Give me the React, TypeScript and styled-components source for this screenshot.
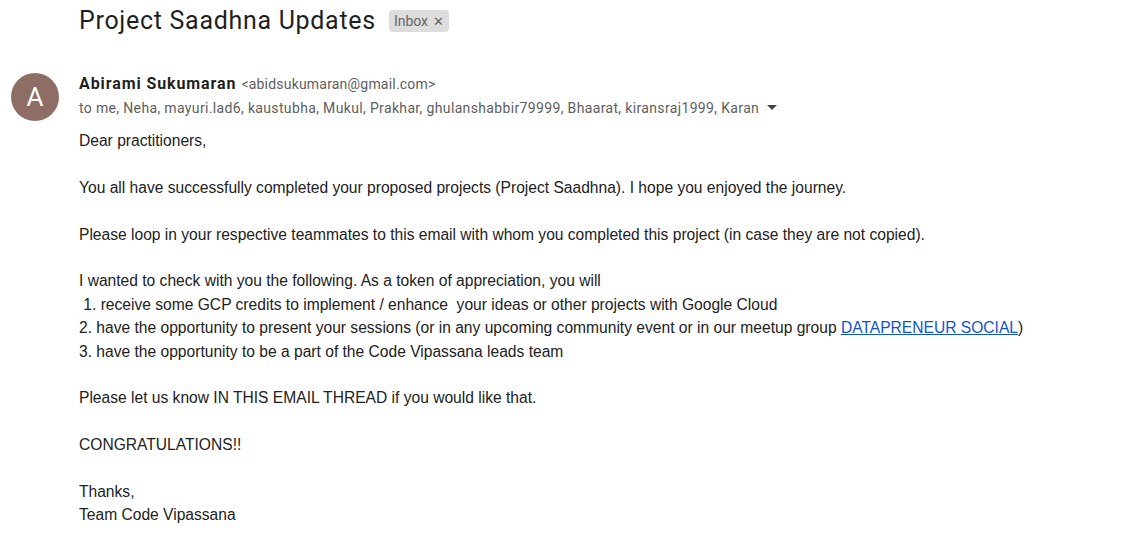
import React from "react";
import styled, { createGlobalStyle } from "styled-components";

const Global = createGlobalStyle`
  html, body { margin: 0; padding: 0; background: #fff; }
  body { font-family: "Liberation Sans", Arial, sans-serif; }
`;

const Page = styled.div`
  width: 1141px;
  height: 534px;
  overflow: hidden;
  background: #fff;
`;

const TitleRow = styled.div`
  display: flex;
  align-items: center;
  gap: 13px;
  padding: 5px 0 0 79px;
  height: 32px;
`;

const Title = styled.h1`
  margin: 0;
  font-family: Roboto, "Open Sans", sans-serif;
  font-weight: 400;
  font-size: 25px;
  letter-spacing: 0.7px;
  color: #1f1f1f;
  line-height: 32px;
`;

const Chip = styled.span`
  display: inline-flex;
  align-items: center;
  gap: 5px;
  height: 22px;
  padding: 0 5px;
  border-radius: 4px;
  background: #dddddd;
  color: #666;
  font-family: Roboto, sans-serif;
  font-size: 14px;
`;

const ChipX = styled.span`
  font-size: 13px;
  color: #666;
`;

const Message = styled.div`
  display: flex;
  gap: 20px;
  padding: 35px 0 0 11px;
`;

const Avatar = styled.div`
  flex: 0 0 48px;
  width: 48px;
  height: 48px;
  border-radius: 50%;
  background: #8e6e64;
  color: #fff;
  display: flex;
  align-items: center;
  justify-content: center;
  font-family: Roboto, sans-serif;
  font-size: 26px;
  margin-top: 1px;
`;

const Content = styled.div`
  display: flex;
  flex-direction: column;
`;

const SenderLine = styled.div`
  display: flex;
  align-items: baseline;
  gap: 5px;
  font-family: Roboto, sans-serif;
  height: 22px;
  padding-top: 2px;
`;

const SenderName = styled.span`
  font-weight: 700;
  font-size: 16px;
  letter-spacing: 0.9px;
  color: #1f1f1f;
`;

const SenderEmail = styled.span`
  font-size: 14px;
  letter-spacing: 0.2px;
  color: #5e5e5e;
`;

const Recipients = styled.div`
  display: flex;
  align-items: center;
  gap: 8px;
  font-family: Roboto, sans-serif;
  font-size: 14px;
  letter-spacing: 0.35px;
  color: #5e5e5e;
  height: 20px;
  margin-top: 2px;
`;

const Body = styled.div`
  margin-top: 11px;
  font-family: "Liberation Sans", Arial, sans-serif;
  font-size: 15.6px;
  line-height: 23.4px;
  color: #222;
`;

const Para = styled.p`
  margin: 0 0 23.4px 0;
`;

const Line = styled.div``;

const Link = styled.a`
  color: #1155cc;
  text-decoration: underline;
`;

export default function App() {
  return (
    <Page>
      <Global />
      <TitleRow>
        <Title>Project Saadhna Updates</Title>
        <Chip>
          Inbox <ChipX>✕</ChipX>
        </Chip>
      </TitleRow>
      <Message>
        <Avatar>A</Avatar>
        <Content>
          <SenderLine>
            <SenderName>Abirami Sukumaran</SenderName>
            <SenderEmail>&lt;abidsukumaran@gmail.com&gt;</SenderEmail>
          </SenderLine>
          <Recipients>
            to me, Neha, mayuri.lad6, kaustubha, Mukul, Prakhar, ghulanshabbir79999, Bhaarat, kiransraj1999, Karan
            <svg width="10" height="6" viewBox="0 0 10 6">
              <path d="M0 0 L10 0 L5 5 Z" fill="#444" />
            </svg>
          </Recipients>
          <Body>
            <Para>Dear practitioners,</Para>
            <Para>
              You all have successfully completed your proposed projects (Project Saadhna). I hope you enjoyed the journey.
            </Para>
            <Para>
              Please loop in your respective teammates to this email with whom you completed this project (in case they are not copied).
            </Para>
            <Para>
              <Line>I wanted to check with you the following. As a token of appreciation, you will</Line>
              <Line>&nbsp;1. receive some GCP credits to implement / enhance&nbsp; your ideas or other projects with Google Cloud</Line>
              <Line>
                2. have the opportunity to present your sessions (or in any upcoming community event or in our meetup group{" "}
                <Link href="#">DATAPRENEUR SOCIAL</Link>)
              </Line>
              <Line>3. have the opportunity to be a part of the Code Vipassana leads team</Line>
            </Para>
            <Para>Please let us know IN THIS EMAIL THREAD if you would like that.</Para>
            <Para>CONGRATULATIONS!!</Para>
            <Para>
              <Line>Thanks,</Line>
              <Line>Team Code Vipassana</Line>
            </Para>
          </Body>
        </Content>
      </Message>
    </Page>
  );
}
